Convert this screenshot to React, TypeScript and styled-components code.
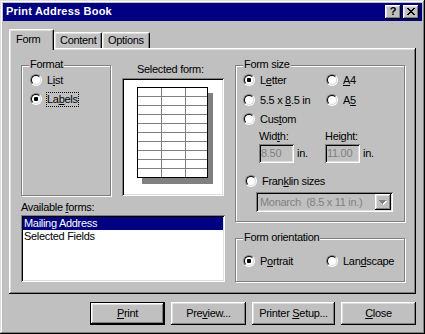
import styled, { createGlobalStyle } from 'styled-components';

const GlobalStyle = createGlobalStyle`
  * { box-sizing: border-box; }
  html, body { margin: 0; padding: 0; background: #c0c0c0; }
  body {
    font-family: "Liberation Sans", Arial, sans-serif;
    font-size: 11px;
    letter-spacing: -0.3px;
    color: #000;
  }
`;

const raised = `box-shadow: inset -1px -1px #000, inset 1px 1px #fff, inset -2px -2px #808080, inset 2px 2px #dfdfdf;`;
const sunken = `box-shadow: inset 1px 1px #808080, inset -1px -1px #fff, inset 2px 2px #000, inset -2px -2px #dfdfdf;`;

export default function App() {
  return (
    <>
      <GlobalStyle />
      <Window>
        <TitleBar>
          <TitleText>Print Address Book</TitleText>
          <CaptionButtons>
            <CaptionButton>?</CaptionButton>
            <CaptionButton>
              <svg width="8" height="7" viewBox="0 0 8 7" shapeRendering="crispEdges">
                <path
                  fill="#000"
                  d="M0 0h2v1H0zM6 0h2v1H6zM1 1h2v1H1zM5 1h2v1H5zM2 2h4v1H2zM3 3h2v1H3zM2 4h4v1H2zM1 5h2v1H1zM5 5h2v1H5zM0 6h2v1H0zM6 6h2v1H6z"
                />
              </svg>
            </CaptionButton>
          </CaptionButtons>
        </TitleBar>

        <Body>
          <TabStrip>
            <Tab $active $w={45} $pl={6}>Form</Tab>
            <Tab $w={48} $pl={5}>Content</Tab>
            <Tab $w={48} $pl={5}>Options</Tab>
          </TabStrip>

          <Panel>
            <Column>
              <TopRow>
                <Group $w={90} $h={131}>
                  <Legend>Format</Legend>
                  <GroupBody $pt={6} $pl={8}>
                    <RadioRow>
                      <RadioMark />
                      <RadioLabel>L<u>i</u>st</RadioLabel>
                    </RadioRow>
                    <RadioRow $mt={3}>
                      <RadioMark $checked />
                      <RadioLabel $focus>La<u>b</u>els</RadioLabel>
                    </RadioRow>
                  </GroupBody>
                </Group>
                <PreviewColumn>
                  <PreviewCaption>Selected form:</PreviewCaption>
                  <PreviewBox>
                    <svg width="77" height="97" viewBox="0 0 77 97" shapeRendering="crispEdges">
                      <rect x="5" y="6" width="71" height="91" fill="#808080" />
                      <rect x="0.5" y="0.5" width="70" height="90" fill="#fff" stroke="#000" />
                      <g stroke="#808080">
                        <line x1="24.5" y1="1" x2="24.5" y2="90" />
                        <line x1="48.5" y1="1" x2="48.5" y2="90" />
                        {[9, 18, 27, 36, 45, 54, 63, 72, 81].map((y) => (
                          <line key={y} x1="1" y1={y + 0.5} x2="70" y2={y + 0.5} />
                        ))}
                      </g>
                    </svg>
                  </PreviewBox>
                </PreviewColumn>
              </TopRow>
              <ListCaption>
                Available <u>f</u>orms:
              </ListCaption>
              <ListBox>
                <ListItem $selected>Mailing Address</ListItem>
                <ListItem>Selected Fields</ListItem>
              </ListBox>
            </Column>

            <Column>
              <Group $w={170} $h={157}>
                <Legend>Form size</Legend>
                <GroupBody $pt={6} $pl={7}>
                  <PairRow>
                    <RadioRow>
                      <RadioMark $checked />
                      <RadioLabel>L<u>e</u>tter</RadioLabel>
                    </RadioRow>
                    <RadioRow>
                      <RadioMark />
                      <RadioLabel><u>A</u>4</RadioLabel>
                    </RadioRow>
                  </PairRow>
                  <PairRow $mt={4}>
                    <RadioRow>
                      <RadioMark />
                      <RadioLabel>5.5 x <u>8</u>.5 in</RadioLabel>
                    </RadioRow>
                    <RadioRow>
                      <RadioMark />
                      <RadioLabel>A<u>5</u></RadioLabel>
                    </RadioRow>
                  </PairRow>
                  <RadioRow $mt={3}>
                    <RadioMark />
                    <RadioLabel>Cus<u>t</u>om</RadioLabel>
                  </RadioRow>
                  <CustomGrid>
                    <div>
                      <FieldCaption>Wid<u>t</u>h:</FieldCaption>
                      <FieldRow>
                        <Field $w={35}>8.50</Field>
                        <Unit>in.</Unit>
                      </FieldRow>
                    </div>
                    <div>
                      <FieldCaption>Hei<u>g</u>ht:</FieldCaption>
                      <FieldRow>
                        <Field $w={35}>11.00</Field>
                        <Unit>in.</Unit>
                      </FieldRow>
                    </div>
                  </CustomGrid>
                  <RadioRow $mt={10} $ml={2}>
                    <RadioMark />
                    <RadioLabel>Fran<u>k</u>lin sizes</RadioLabel>
                  </RadioRow>
                  <Combo>
                    <ComboText>Monarch  (8.5 x 11 in.)</ComboText>
                    <ComboButton>
                      <svg width="8" height="5" viewBox="0 0 8 5" shapeRendering="crispEdges">
                        <path fill="#fff" d="M1 1h7v1H1zM2 2h5v1H2zM3 3h3v1H3zM4 4h1v1H4z" />
                        <path fill="#808080" d="M0 0h7v1H0zM1 1h5v1H1zM2 2h3v1H2zM3 3h1v1H3z" />
                      </svg>
                    </ComboButton>
                  </Combo>
                </GroupBody>
              </Group>

              <Group $w={170} $h={44} $mt={16}>
                <Legend>Form orientation</Legend>
                <GroupBody $pt={14} $pl={7}>
                  <PairRow>
                    <RadioRow>
                      <RadioMark $checked />
                      <RadioLabel>P<u>o</u>rtrait</RadioLabel>
                    </RadioRow>
                    <RadioRow>
                      <RadioMark />
                      <RadioLabel>Lan<u>d</u>scape</RadioLabel>
                    </RadioRow>
                  </PairRow>
                </GroupBody>
              </Group>
            </Column>
          </Panel>

          <ButtonRow>
            <PushButton $default $w={75}>
              <span><u>P</u>rint</span>
            </PushButton>
            <PushButton $w={75}>
              <span>Pre<u>v</u>iew...</span>
            </PushButton>
            <PushButton $w={83}>
              <span>Printer <u>S</u>etup...</span>
            </PushButton>
            <PushButton $w={75}>
              <span><u>C</u>lose</span>
            </PushButton>
          </ButtonRow>
        </Body>
      </Window>
    </>
  );
}

const Window = styled.div`
  width: 425px;
  height: 334px;
  padding: 3px;
  background: #c0c0c0;
  box-shadow: inset -1px -1px #000, inset 1px 1px #dfdfdf, inset -2px -2px #808080, inset 2px 2px #fff;
  display: flex;
  flex-direction: column;
`;

const TitleBar = styled.div`
  height: 18px;
  background: #000080;
  display: flex;
  align-items: center;
  justify-content: space-between;
  padding: 0 3px 0 3px;
`;

const TitleText = styled.span`
  color: #fff;
  font-weight: bold;
  letter-spacing: 0.2px;
  line-height: 13px;
  margin-top: -1px;
`;

const CaptionButtons = styled.div`
  display: flex;
  gap: 2px;
`;

const CaptionButton = styled.span`
  width: 16px;
  height: 14px;
  background: #c0c0c0;
  ${raised}
  display: flex;
  align-items: center;
  justify-content: center;
  font-weight: bold;
  font-size: 11px;
  line-height: 11px;
  padding-bottom: 1px;
  letter-spacing: 0;
`;

const Body = styled.div`
  flex: 1;
  display: flex;
  flex-direction: column;
  padding: 8px 6px 0;
`;

const TabStrip = styled.div`
  display: flex;
  align-items: flex-end;
  height: 21px;
  margin-bottom: -2px;
  position: relative;
  z-index: 1;
`;

const Tab = styled.div<{ $active?: boolean; $w: number; $pl: number }>`
  width: ${(p) => p.$w}px;
  height: ${(p) => (p.$active ? 21 : 16)}px;
  margin-bottom: ${(p) => (p.$active ? 0 : 2)}px;
  padding: ${(p) => (p.$active ? 3 : 1)}px 0 0 ${(p) => p.$pl}px;
  line-height: 13px;
  background: #c0c0c0;
  border-top: 1px solid #fff;
  border-left: 1px solid #fff;
  border-right: 1px solid #000;
  border-radius: 2px 2px 0 0;
  box-shadow: inset -1px 0 #808080, inset 1px 1px #dfdfdf;
`;

const Panel = styled.div`
  display: grid;
  grid-template-columns: 204px 170px;
  column-gap: 10px;
  align-items: start;
  padding: 17px 11px 12px 12px;
  background: #c0c0c0;
  ${raised}
`;

const Column = styled.div`
  display: flex;
  flex-direction: column;
`;

const TopRow = styled.div`
  display: flex;
  gap: 11px;
`;

const Group = styled.div<{ $w: number; $h: number; $mt?: number }>`
  position: relative;
  width: ${(p) => p.$w}px;
  height: ${(p) => p.$h}px;
  margin-top: ${(p) => p.$mt ?? 0}px;
  border: 1px solid #808080;
  box-shadow: inset 1px 1px #fff, 1px 1px #fff;
`;

const Legend = styled.span`
  position: absolute;
  top: -8px;
  left: 7px;
  padding: 0 1px;
  line-height: 13px;
  background: #c0c0c0;
`;

const GroupBody = styled.div<{ $pt: number; $pl: number }>`
  display: flex;
  flex-direction: column;
  padding: ${(p) => p.$pt}px 0 0 ${(p) => p.$pl}px;
`;

const PairRow = styled.div<{ $mt?: number }>`
  display: grid;
  grid-template-columns: 83px 1fr;
  margin-top: ${(p) => p.$mt ?? 0}px;
`;

const RadioRow = styled.div<{ $mt?: number; $ml?: number }>`
  display: flex;
  align-items: center;
  height: 16px;
  margin-top: ${(p) => p.$mt ?? 0}px;
  margin-left: ${(p) => p.$ml ?? 0}px;
`;

const RadioMark = styled.span<{ $checked?: boolean }>`
  position: relative;
  flex: none;
  width: 12px;
  height: 12px;
  border-radius: 50%;
  border: 1px solid;
  border-color: #808080 #fff #fff #808080;
  &::before {
    content: '';
    position: absolute;
    inset: 0;
    border-radius: 50%;
    border: 1px solid;
    border-color: #000 #dfdfdf #dfdfdf #000;
    background: #fff;
  }
  &::after {
    content: '';
    display: ${(p) => (p.$checked ? 'block' : 'none')};
    position: absolute;
    left: 3px;
    top: 3px;
    width: 4px;
    height: 4px;
    border-radius: 1px;
    background: #000;
  }
`;

const RadioLabel = styled.span<{ $focus?: boolean }>`
  margin-left: 4px;
  line-height: 13px;
  border: 1px dotted ${(p) => (p.$focus ? '#000' : 'transparent')};
  white-space: nowrap;
`;

const PreviewColumn = styled.div`
  width: 102px;
  display: flex;
  flex-direction: column;
`;

const PreviewCaption = styled.div`
  margin-top: -2px;
  padding-left: 15px;
  line-height: 13px;
`;

const PreviewBox = styled.div`
  margin-top: 2px;
  height: 118px;
  background: #fff;
  ${sunken}
  padding: 9px 0 0 15px;
`;

const ListCaption = styled.div`
  margin-top: 5px;
  line-height: 13px;
`;

const ListBox = styled.div`
  margin-top: 1px;
  height: 67px;
  background: #fff;
  ${sunken}
  padding: 2px;
`;

const ListItem = styled.div<{ $selected?: boolean }>`
  height: 13px;
  line-height: 13px;
  padding-left: 1px;
  background: ${(p) => (p.$selected ? '#000080' : 'transparent')};
  color: ${(p) => (p.$selected ? '#fff' : '#000')};
`;

const CustomGrid = styled.div`
  display: grid;
  grid-template-columns: 66px 1fr;
  margin: 3px 0 0 16px;
`;

const FieldCaption = styled.div`
  line-height: 13px;
`;

const FieldRow = styled.div`
  display: flex;
  align-items: center;
  gap: 3px;
  margin-top: 1px;
`;

const Field = styled.div<{ $w: number }>`
  width: ${(p) => p.$w}px;
  height: 19px;
  ${sunken}
  padding: 3px 0 0 2px;
  line-height: 13px;
  color: #808080;
`;

const Unit = styled.span`
  line-height: 13px;
`;

const Combo = styled.div`
  width: 137px;
  height: 20px;
  margin: 3px 0 0 13px;
  ${sunken}
  display: flex;
  padding: 2px;
  color: #808080;
`;

const ComboText = styled.span`
  flex: 1;
  padding: 2px 0 0 2px;
  line-height: 13px;
  white-space: pre;
`;

const ComboButton = styled.span`
  width: 16px;
  background: #c0c0c0;
  ${raised}
  display: flex;
  align-items: center;
  justify-content: center;
`;

const ButtonRow = styled.div`
  display: flex;
  justify-content: flex-end;
  gap: 6px;
  margin-top: 8px;
`;

const PushButton = styled.div<{ $w: number; $default?: boolean }>`
  width: ${(p) => p.$w}px;
  height: 23px;
  display: flex;
  align-items: center;
  justify-content: center;
  line-height: 13px;
  white-space: nowrap;
  background: #c0c0c0;
  box-shadow: ${(p) =>
    p.$default
      ? 'inset 0 0 0 1px #000, inset -2px -2px #000, inset 2px 2px #fff, inset -3px -3px #808080, inset 3px 3px #dfdfdf'
      : 'inset -1px -1px #000, inset 1px 1px #fff, inset -2px -2px #808080, inset 2px 2px #dfdfdf'};
`;
